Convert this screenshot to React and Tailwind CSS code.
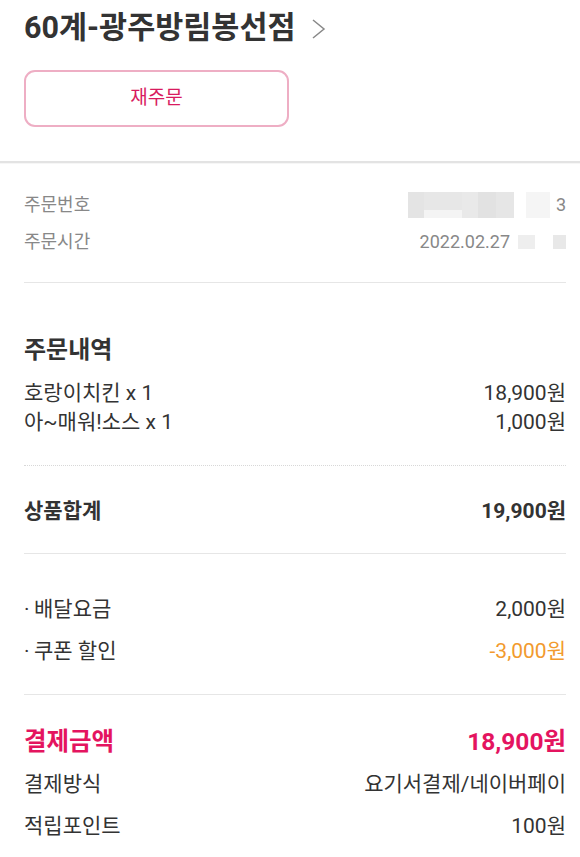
const FONT = { fontFamily: "Roboto, 'Noto Sans CJK KR', sans-serif" };

function Row({ label, value, className = "", valueClassName = "" }) {
  return (
    <div className={`flex items-center justify-between ${className}`}>
      <span>{label}</span>
      <span className={valueClassName}>{value}</span>
    </div>
  );
}

function Bullet({ children }) {
  return (
    <span className="flex items-center">
      <span className="w-[10px]">·</span>
      {children}
    </span>
  );
}

export default function App() {
  return (
    <div className="w-[580px] min-h-[857px] bg-white text-[#333]" style={FONT}>
      <header className="px-6 pt-[10px] pb-[34px]">
        <div className="flex items-center gap-[15px]">
          <h1 className="text-[30.5px] font-bold leading-[36px] text-[#333]">60계-광주방림봉선점</h1>
          <svg width="15" height="22" viewBox="0 0 15 22" className="mt-[2px]">
            <path d="M2 2 L13 11 L2 20" fill="none" stroke="#888" strokeWidth="1.5" />
          </svg>
        </div>
        <button className="mt-[24px] flex h-[57px] w-[265px] items-center justify-center rounded-[11px] border-2 border-[#eeaec4] text-[19px] text-[#d81b60]">
          재주문
        </button>
      </header>

      <div className="h-[3px] border-t-2 border-[#e3e3e3] bg-[#f6f6f6]" />

      <section className="pl-6 pr-[14px] pt-[22px] pb-[22px] text-[18px] text-[#888]">
        <div className="flex h-[37px] items-center justify-between">
          <span>주문번호</span>
          <div className="flex items-center">
            <div className="flex h-[26px] items-stretch">
              <div className="w-[16px] bg-[#e4e4e4]" />
              <div className="flex w-[38px] flex-col">
                <div className="h-[18px] bg-[#e7e7e7]" />
                <div className="h-[8px] bg-[#f4f4f4]" />
              </div>
              <div className="w-[16px] bg-[#e9e9e9]" />
              <div className="flex w-[18px] flex-col">
                <div className="h-[18px] bg-[#e2e2e2]" />
                <div className="h-[8px] bg-[#e2e2e2]" />
              </div>
              <div className="w-[18px] bg-[#e6e6e6]" />
            </div>
            <div className="ml-[12px] h-[26px] w-[24px] bg-[#f5f5f5]" />
            <span className="ml-[6px]">3</span>
          </div>
        </div>
        <div className="flex h-[37px] items-center justify-between">
          <span>주문시간</span>
          <div className="flex items-center">
            <span>2022.02.27</span>
            <div className="ml-[8px] h-[14px] w-[17px] bg-[#eeeeee]" />
            <div className="ml-[18px] h-[14px] w-[13px] bg-[#e8e8e8]" />
          </div>
        </div>
      </section>

      <div className="ml-6 mr-[14px] border-t border-[#e6e6e6]" />

      <section className="pl-6 pr-[14px] pt-[50px] pb-[28px]">
        <h2 className="text-[24px] font-bold leading-[34px]">주문내역</h2>
        <div className="mt-[12px] text-[21px] leading-[29px]">
          <Row label="호랑이치킨 x 1" value="18,900원" />
          <Row label="아~매워!소스 x 1" value="1,000원" />
        </div>
      </section>

      <div className="ml-6 mr-[14px] border-t border-dotted border-[#d8d8d8]" />

      <section className="pl-6 pr-[14px] pt-[31px] pb-[26px]">
        <Row label="상품합계" value="19,900원" className="h-[30px] text-[21px] font-bold" />
      </section>

      <div className="ml-6 mr-[14px] border-t border-[#e6e6e6]" />

      <section className="pl-6 pr-[14px] pt-[35px] pb-[21px] text-[21px]">
        <Row label={<Bullet>배달요금</Bullet>} value="2,000원" className="h-[42px]" />
        <Row
          label={<Bullet>쿠폰 할인</Bullet>}
          value="-3,000원"
          className="h-[42px]"
          valueClassName="text-[#f29a2e]"
        />
      </section>

      <div className="ml-6 mr-[14px] border-t border-[#e6e6e6]" />

      <section className="pl-6 pr-[14px] pt-[25px] text-[21px]">
        <Row label="결제금액" value="18,900원" className="h-[44px] text-[24.5px] font-bold text-[#e4145f]" />
        <Row label="결제방식" value="요기서결제/네이버페이" className="h-[42px]" />
        <Row label="적립포인트" value="100원" className="h-[42px]" />
      </section>
    </div>
  );
}
